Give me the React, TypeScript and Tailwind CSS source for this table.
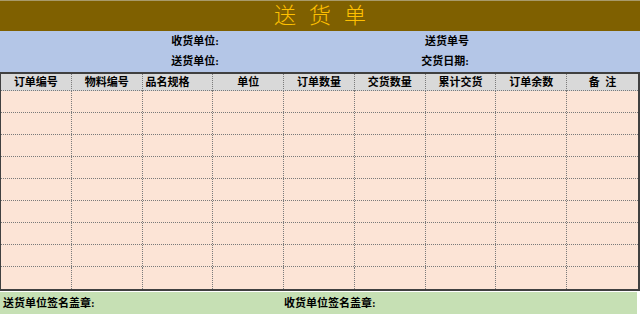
const headers = ['订单编号', '物料编号', '品名规格', '单位', '订单数量', '交货数量', '累计交货', '订单余数', '备  注'];
const rows = Array.from({ length: 9 });

const App = () => {
  return (
    <div className="w-[640px] h-[316px] bg-white font-['Liberation_Serif','Noto_Sans_CJK_SC',serif] text-black">
      {/* Title */}
      <div className="h-[31px] bg-[#7f6000] border-t border-[#a89a6a] flex items-center justify-center">
        <span className="text-[22px] font-light leading-none tracking-[13px] pl-[13px] text-[#ffc000]">送货单</span>
      </div>

      {/* Info */}
      <div className="h-[41px] bg-[#b4c6e7] text-[11px] font-bold">
        <div className="h-[20px] flex items-center">
          <span className="w-[219px] text-right">收货单位:</span>
          <span className="w-[250px] text-right">送货单号</span>
        </div>
        <div className="h-[21px] flex items-center">
          <span className="w-[219px] text-right">送货单位:</span>
          <span className="w-[250px] text-right">交货日期:</span>
        </div>
      </div>

      {/* Table */}
      <div className="w-[640px] border-t-2 border-l border-r-2 border-b-2 border-[#404040]">
        <div className="grid grid-cols-9 h-[17px] bg-[#d9d9d9] border-b border-dotted border-[#7a7a7a] text-[11px] font-bold">
          {headers.map((h, i) => (
            <div
              key={i}
              className={`flex items-center whitespace-pre ${i === 2 ? 'justify-start pl-[3px]' : 'justify-center'} ${i < 8 ? 'border-r border-dotted border-[#7a7a7a]' : ''}`}
            >
              {h}
            </div>
          ))}
        </div>
        {rows.map((_, r) => (
          <div
            key={r}
            className={`grid grid-cols-9 h-[22px] bg-[#fce4d6] ${r < 8 ? 'border-b border-dotted border-[#7a7a7a]' : ''}`}
          >
            {headers.map((_, i) => (
              <div key={i} className={i < 8 ? 'border-r border-dotted border-[#7a7a7a]' : ''} />
            ))}
          </div>
        ))}
      </div>

      {/* Footer */}
      <div className="mt-[1px] w-[637px] h-[22px] bg-[#c6e0b4] flex items-center text-[11px] font-bold">
        <span className="w-[284px] pl-[3px]">送货单位签名盖章:</span>
        <span>收货单位签名盖章:</span>
      </div>
    </div>
  );
};

export default App;
